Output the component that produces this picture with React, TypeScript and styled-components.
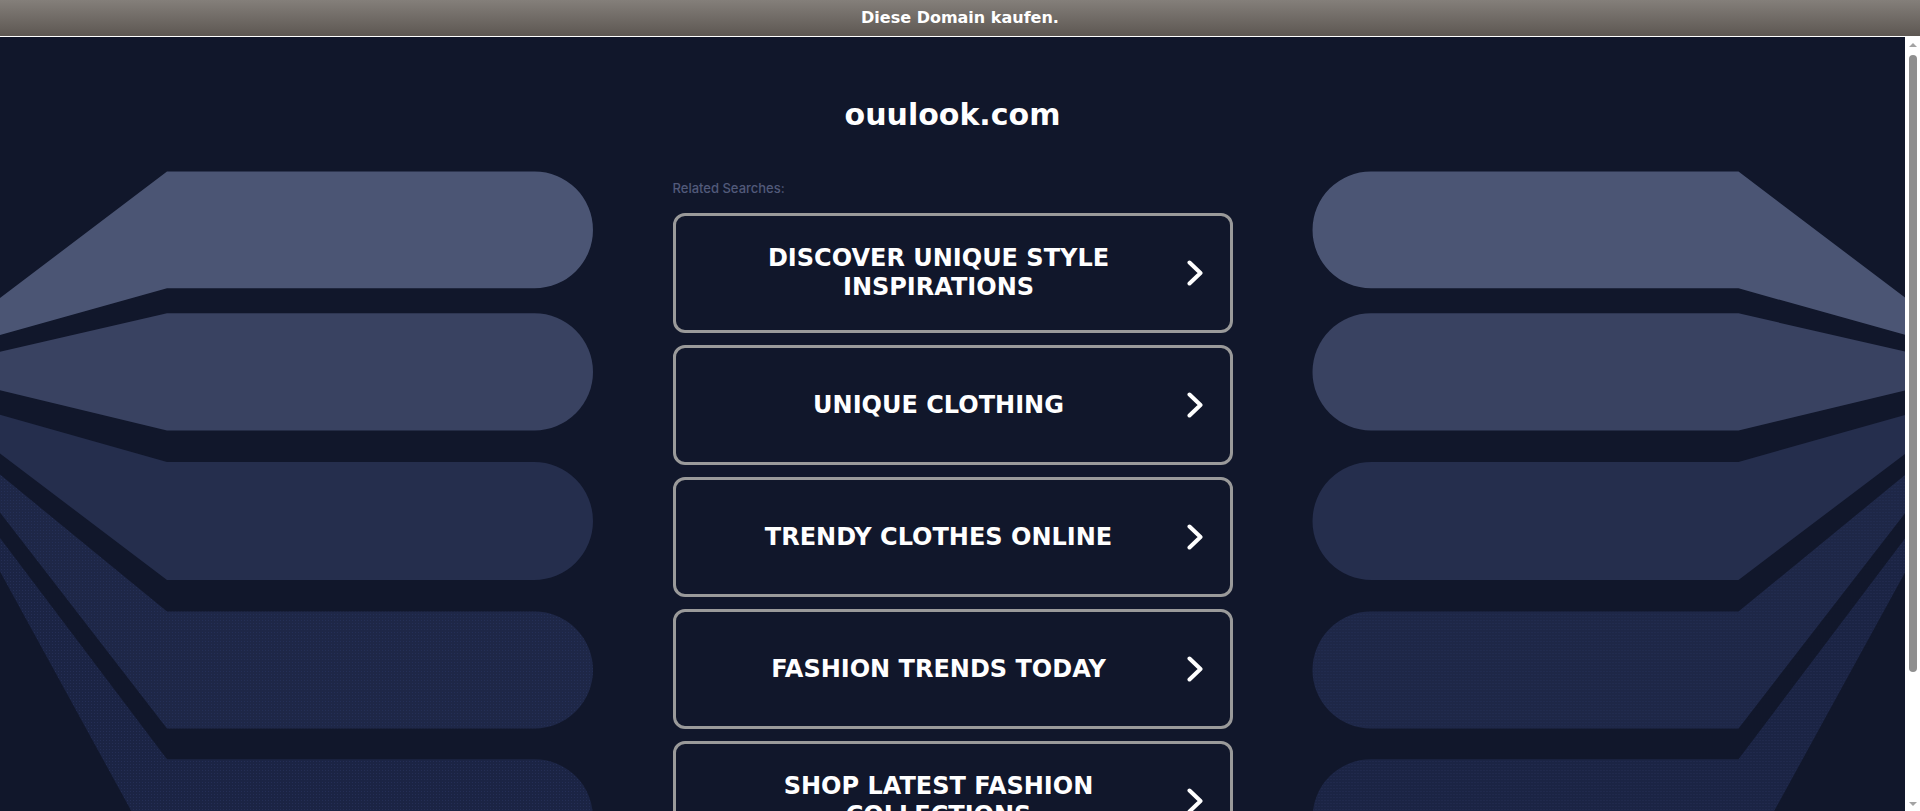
import React from "react";
import styled, { createGlobalStyle } from "styled-components";

const GlobalStyle = createGlobalStyle`
  html, body {
    margin: 0;
    padding: 0;
    height: 100%;
    overflow: hidden;
    background: #ffffff;
  }
  body {
    font-family: "DejaVu Sans", "Liberation Sans", sans-serif;
  }
`;

const Page = styled.div`
  display: flex;
  flex-direction: column;
  height: 100vh;
`;

const TopBar = styled.a`
  flex: 0 0 36px;
  display: flex;
  align-items: center;
  justify-content: center;
  background: linear-gradient(180deg, #847f7a 0%, #5d5752 100%);
  border-bottom: 1px solid #ffffff;
  color: #ffffff;
  font: bold 16px/1 "DejaVu Sans", sans-serif;
  text-decoration: none;
`;

const Frame = styled.div`
  flex: 1;
  min-height: 0;
  display: flex;
`;

const Viewport = styled.div`
  flex: 1;
  min-width: 0;
  overflow: hidden;
  background: #11172b;
`;

const ScrollRail = styled.div`
  flex: 0 0 15px;
  display: flex;
  flex-direction: column;
  align-items: center;
  background: #ffffff;
`;

const RailArrow = styled.div<{ $down?: boolean }>`
  flex: 0 0 15px;
  width: 15px;
  display: flex;
  align-items: center;
  justify-content: center;
  &::before {
    content: "";
    width: 0;
    height: 0;
    border-left: 4px solid transparent;
    border-right: 4px solid transparent;
    ${(p) => (p.$down ? "border-top: 4px solid #a3a3a3;" : "border-bottom: 4px solid #a3a3a3;")}
  }
`;

const Thumb = styled.div`
  margin-top: 3px;
  width: 8px;
  height: 617px;
  border-radius: 4px;
  background: #8f8f8f;
`;

const RailSpacer = styled.div`
  flex: 1;
`;

const Stage = styled.div`
  display: grid;
  grid-template-columns: 1fr 560px 1fr;
  min-height: 933px;
`;

const FanSvg = styled.svg<{ $mirrored?: boolean }>`
  display: block;
  width: 100%;
  height: 933px;
  transform: ${(p) => (p.$mirrored ? "scaleX(-1)" : "none")};
`;

const Main = styled.main`
  display: flex;
  flex-direction: column;
  padding-top: 60px;
`;

const Title = styled.h1`
  margin: 0;
  text-align: center;
  color: #ffffff;
  font: bold 30px/36px "DejaVu Sans", sans-serif;
`;

const Label = styled.div`
  margin-top: 47px;
  color: #525a7a;
  font: 500 13px/16px Inter, "Open Sans", sans-serif;
`;

const List = styled.div`
  margin-top: 17px;
  display: flex;
  flex-direction: column;
  gap: 12px;
`;

const Item = styled.a`
  box-sizing: border-box;
  height: 120px;
  display: flex;
  align-items: center;
  padding: 0 27px 0 25px;
  border: 3px solid #9a9a9a;
  border-radius: 12px;
  color: #ffffff;
  text-decoration: none;
`;

const ItemText = styled.span`
  flex: 1;
  text-align: center;
  text-transform: uppercase;
  font: bold 24px/29px "DejaVu Sans", sans-serif;
`;

const Chevron = styled.svg`
  flex: 0 0 16px;
  width: 16px;
  height: 26px;
  margin-left: 10px;
`;

type Band = { top: number; bottom: number; leftTop: number; leftBottom: number; fill: string; dotted?: boolean };

const OFFSET = 37;
const bands: Band[] = [
  { top: 171.5, bottom: 288.3, leftTop: 298, leftBottom: 335, fill: "#4b5574" },
  { top: 313.3, bottom: 430.5, leftTop: 351.7, leftBottom: 390.3, fill: "#394261" },
  { top: 462, bottom: 580, leftTop: 414.8, leftBottom: 453.5, fill: "#252e4d" },
  { top: 611.6, bottom: 728.4, leftTop: 474.6, leftBottom: 512.6, fill: "#1e2747", dotted: true },
  { top: 759.2, bottom: 876, leftTop: 537.9, leftBottom: 571.6, fill: "#1b2444", dotted: true },
];

function bandPath(b: Band) {
  const t = b.top - OFFSET;
  const bo = b.bottom - OFFSET;
  const lt = b.leftTop - OFFSET;
  const lb = b.leftBottom - OFFSET;
  const r = (bo - t) / 2;
  const xr = 593 - r;
  return `M0 ${lt} L167 ${t} L${xr} ${t} A${r} ${r} 0 0 1 ${xr} ${bo} L167 ${bo} L0 ${lb} Z`;
}

function Fan({ mirrored, id }: { mirrored?: boolean; id: string }) {
  return (
    <FanSvg $mirrored={mirrored} viewBox="0 0 672.5 933" preserveAspectRatio="none" aria-hidden>
      <defs>
        {bands.map((b, i) =>
          b.dotted ? (
            <pattern key={i} id={`${id}-dots-${i}`} width="3" height="3" patternUnits="userSpaceOnUse">
              <rect width="3" height="3" fill={b.fill} />
              <circle cx="1.5" cy="1.5" r="0.55" fill="#253058" />
            </pattern>
          ) : null
        )}
      </defs>
      {bands.map((b, i) => (
        <path key={i} d={bandPath(b)} fill={b.dotted ? `url(#${id}-dots-${i})` : b.fill} />
      ))}
    </FanSvg>
  );
}

const searches = [
  "Discover Unique Style Inspirations",
  "Unique Clothing",
  "Trendy Clothes Online",
  "Fashion Trends Today",
  "Shop Latest Fashion Collections",
];

export default function App() {
  return (
    <>
      <GlobalStyle />
      <Page>
        <TopBar href="#">Diese Domain kaufen.</TopBar>
        <Frame>
          <Viewport>
            <Stage>
              <Fan id="left" />
              <Main>
                <Title>ouulook.com</Title>
                <Label>Related Searches:</Label>
                <List>
                  {searches.map((s) => (
                    <Item key={s} href="#">
                      <ItemText>{s}</ItemText>
                      <Chevron viewBox="0 0 16 26">
                        <polyline
                          points="2.5,2.5 13.5,13 2.5,23.5"
                          fill="none"
                          stroke="#ffffff"
                          strokeWidth="4"
                          strokeLinecap="round"
                          strokeLinejoin="round"
                        />
                      </Chevron>
                    </Item>
                  ))}
                </List>
              </Main>
              <Fan id="right" mirrored />
            </Stage>
          </Viewport>
          <ScrollRail aria-hidden>
            <RailArrow />
            <Thumb />
            <RailSpacer />
            <RailArrow $down />
          </ScrollRail>
        </Frame>
      </Page>
    </>
  );
}
